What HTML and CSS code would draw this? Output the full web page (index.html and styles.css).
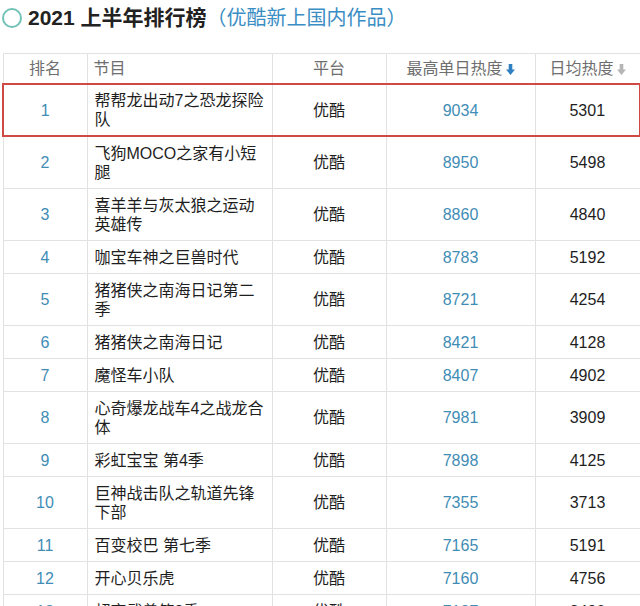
FILE: index.html
```html
<!DOCTYPE html>
<html lang="zh">
<head>
<meta charset="utf-8">
<link rel="stylesheet" href="styles.css">
</head>
<body>
<h1 class="title">
  <span class="ring"></span>
  <span class="title-main">2021 上半年排行榜</span><span class="title-sub">（优酷新上国内作品）</span>
</h1>
<table class="rank">
  <colgroup>
    <col class="c-rank"><col class="c-name"><col class="c-plat"><col class="c-max"><col class="c-avg">
  </colgroup>
  <thead>
    <tr>
      <th>排名</th>
      <th class="left">节目</th>
      <th>平台</th>
      <th>最高单日热度<svg class="arrow blue" viewBox="0 0 10 12"><path d="M3 0h4v6h3l-5 6-5-6h3z"/></svg></th>
      <th>日均热度<svg class="arrow gray" viewBox="0 0 10 12"><path d="M3 0h4v6h3l-5 6-5-6h3z"/></svg></th>
    </tr>
  </thead>
  <tbody>
    <tr class="hl"><td class="num">1</td><td class="name">帮帮龙出动7之恐龙探险队</td><td>优酷</td><td class="num">9034</td><td>5301</td></tr>
    <tr><td class="num">2</td><td class="name">飞狗MOCO之家有小短腿</td><td>优酷</td><td class="num">8950</td><td>5498</td></tr>
    <tr><td class="num">3</td><td class="name">喜羊羊与灰太狼之运动英雄传</td><td>优酷</td><td class="num">8860</td><td>4840</td></tr>
    <tr><td class="num">4</td><td class="name">咖宝车神之巨兽时代</td><td>优酷</td><td class="num">8783</td><td>5192</td></tr>
    <tr><td class="num">5</td><td class="name">猪猪侠之南海日记第二季</td><td>优酷</td><td class="num">8721</td><td>4254</td></tr>
    <tr><td class="num">6</td><td class="name">猪猪侠之南海日记</td><td>优酷</td><td class="num">8421</td><td>4128</td></tr>
    <tr><td class="num">7</td><td class="name">魔怪车小队</td><td>优酷</td><td class="num">8407</td><td>4902</td></tr>
    <tr><td class="num">8</td><td class="name">心奇爆龙战车4之战龙合体</td><td>优酷</td><td class="num">7981</td><td>3909</td></tr>
    <tr><td class="num">9</td><td class="name">彩虹宝宝 第4季</td><td>优酷</td><td class="num">7898</td><td>4125</td></tr>
    <tr><td class="num">10</td><td class="name">巨神战击队之轨道先锋下部</td><td>优酷</td><td class="num">7355</td><td>3713</td></tr>
    <tr><td class="num">11</td><td class="name">百变校巴 第七季</td><td>优酷</td><td class="num">7165</td><td>5191</td></tr>
    <tr><td class="num">12</td><td class="name">开心贝乐虎</td><td>优酷</td><td class="num">7160</td><td>4756</td></tr>
    <tr><td class="num">13</td><td class="name">超变武兽第2季</td><td>优酷</td><td class="num">7127</td><td>3490</td></tr>
  </tbody>
</table>
</body>
</html>
```
FILE: styles.css
```css
html, body {
  margin: 0;
  padding: 0;
  background: #fff;
}
body {
  font-family: "Liberation Sans", "Noto Sans CJK SC", sans-serif;
  color: #1e1e1e;
  overflow: hidden;
}
.title {
  display: flex;
  align-items: center;
  margin: 0;
  padding: 3px 0 0 2px;
  height: 30px;
  font-size: 21px;
  line-height: 28px;
  font-weight: normal;
  margin-bottom: 20px;
}
.ring {
  width: 16px;
  height: 16px;
  border: 2.5px solid #72c2b8;
  border-radius: 50%;
  margin-right: 6px;
  flex: none;
}
.title-main {
  font-weight: bold;
  color: #222;
}
.title-sub {
  color: #3b8ec4;
  font-size: 20px;
}
.rank {
  border-collapse: collapse;
  margin-left: 2px;
  width: 637px;
  table-layout: fixed;
  font-size: 16px;
  line-height: 19px;
}
.c-rank { width: 84px; }
.c-name { width: 185px; }
.c-plat { width: 114px; }
.c-max { width: 149px; }
.c-avg { width: 105px; }
.rank th, .rank td {
  border: 1px solid #e2e2e2;
  text-align: center;
  vertical-align: middle;
}
.rank th {
  font-weight: normal;
  color: #6e6e6e;
  padding: 5px 6px;
}
.rank td {
  padding: 6.5px 7px;
}
.rank .left, .rank .name {
  text-align: left;
}
.rank .num {
  color: #3f8db5;
}
.arrow {
  width: 9px;
  height: 11px;
  margin-left: 3px;
  vertical-align: -1px;
}
.arrow.blue { fill: #2f80c3; }
.arrow.gray { fill: #b5b5b5; }
.rank tr.hl td {
  padding-top: 6px;
  padding-bottom: 6px;
  border-top: 2px solid #cf4a44;
  border-bottom: 2px solid #cf4a44;
}
.rank tr.hl td:first-child { border-left: 2px solid #cf4a44; }
.rank tr.hl td:last-child { border-right: 2px solid #cf4a44; }
```
